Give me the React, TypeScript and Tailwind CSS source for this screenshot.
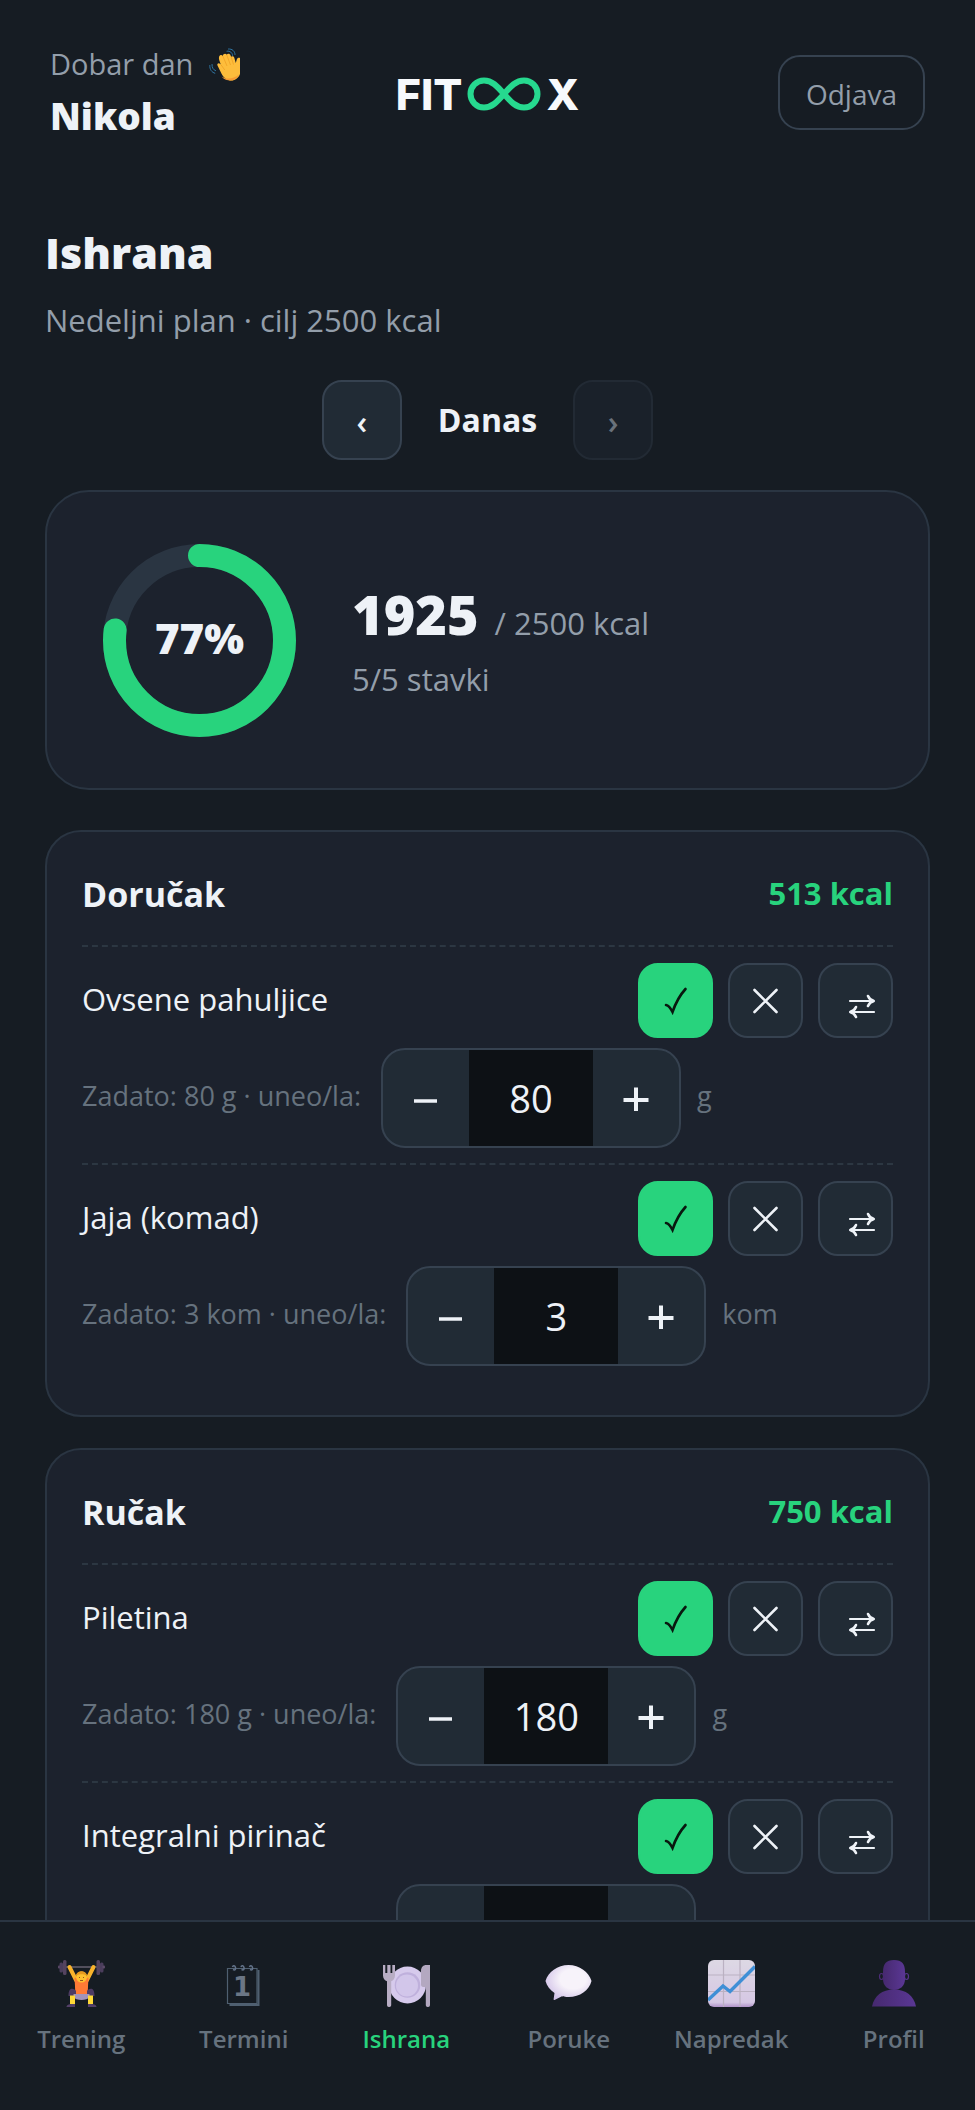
import React, { useState } from 'react';
import clsx from 'clsx';

interface MealItem {
  name: string;
  target: number;
  unit: string;
}

interface Meal {
  title: string;
  kcal: number;
  items: MealItem[];
}

const meals: Meal[] = [
  {
    title: 'Doručak',
    kcal: 513,
    items: [
      { name: 'Ovsene pahuljice', target: 80, unit: 'g' },
      { name: 'Jaja (komad)', target: 3, unit: 'kom' },
    ],
  },
  {
    title: 'Ručak',
    kcal: 750,
    items: [
      { name: 'Piletina', target: 180, unit: 'g' },
      { name: 'Integralni pirinač', target: 200, unit: 'g' },
    ],
  },
];

/* Icons */

const WaveIcon = () => (
  <svg viewBox="0 0 31 33" className="h-[33px] w-[31px]" aria-hidden="true">
    <path
      d="M8.500 17.500c-.8-1.800 1-3.200 2.500-1.800l.8.800-1.600-4.500C9.600 9.500 10 7.500 11.500 7c1-.3 1.800.2 2.300 1 .2-2.300 2.900-3 3.900-1.200.9-1.500 3.200-1.300 3.800.5l.6 1.500c1-1 2.700-.5 3.100.8l1.600 5.400.9-3.200c.5-1.700 2-2.300 3.300-1.800V26c-1.500 4-5 6.500-8.500 6.500-4.500 0-7.500-2.500-9.800-6.500z"
      fill="#fdbd3c"
    />
    <path d="M11.800 16.500l4 5.500M13.800 8l4.200 10M17.700 6.800L21.500 17M22.100 8.800l2.400 7.700" stroke="#f0a427" strokeWidth="0.900" fill="none" />
    <path d="M12.500 28.500c4 3 12 3 17.500-2-2 4-5.500 6-8.500 6s-6.500-1-9-4z" fill="#f59a33" />
    <path
      d="M18 3.200c3-.6 5.400 1.500 5.600 4.300M19.500 1c3.800-.3 6.500 2.300 6.500 5.500M3 16.500c-.2 3 1.200 5.300 3.600 6.200M.8 17.500c-.2 4 2 7 5 7.700"
      fill="none"
      stroke="#2f76a3"
      strokeWidth="1"
      strokeLinecap="round"
    />
  </svg>
);

const LifterIcon = () => (
  <svg viewBox="0 0 47 47" className="size-[47px]" aria-hidden="true">
    <path d="M5 7h37" stroke="#8d8196" strokeWidth="1.200" />
    <rect x="0" y="5.500" width="2.500" height="3" rx="1" fill="#5b4a68" />
    <rect x="1.500" y="2.500" width="3.500" height="10" rx="1.500" fill="#4b3d5c" />
    <rect x="5" y="0" width="3.500" height="15" rx="1.500" fill="#54435f" />
    <rect x="38.500" y="0" width="3.500" height="15" rx="1.500" fill="#54435f" />
    <rect x="42" y="2.500" width="3.500" height="10" rx="1.500" fill="#4b3d5c" />
    <rect x="44.500" y="5.500" width="2.500" height="3" rx="1" fill="#5b4a68" />
    <path d="M11.500 7l6.500 13M35.500 7L29 20" stroke="#f9b32c" strokeWidth="4" strokeLinecap="round" />
    <path d="M16.500 18c2.500-1.500 11.500-1.500 14 0l-1 17h-12z" fill="#ff7a35" />
    <circle cx="23.500" cy="17" r="5.500" fill="#fdc02f" />
    <path d="M18 16c0-6.500 11-6.500 11 0-2-2.500-9-2.500-11 0z" fill="#e59a1f" />
    <path d="M21.500 17v1M25.500 17v1M22 20.500h3" stroke="#8a4b1f" strokeWidth="0.900" />
    <path d="M10.500 36c0-9 5-8 7.500-5v5zM36.500 36c0-9-5-8-7.500-5v5z" fill="#4d3b63" />
    <path d="M15.500 34h16v3c-2 4-14 4-16 0z" fill="#a293b8" />
    <path d="M12 35.500h5V44h-5zM30 35.500h5V44h-5z" fill="#ffd936" />
    <path d="M8.500 47c0-2.500 3-3 8.500-3v3zM38.500 47c0-2.500-3-3-8.500-3v3z" fill="#544069" />
  </svg>
);

const CalendarIcon = () => (
  <svg viewBox="0 0 47 47" className="size-[47px]" aria-hidden="true">
    <path d="M7.500 8.500H37v35H7.500z" fill="none" stroke="#4f5f70" strokeWidth="1.200" />
    <path d="M38.500 10v35H9.500" fill="none" stroke="#4f5f70" strokeWidth="2" />
    <path
      d="M13 9.500c2 1 3 0 2.500-2S13 5.200 12.500 7M21.500 9.500c2 1 3 0 2.500-2S21.500 5.200 21 7M30 9.500c2 1 3 0 2.500-2S30 5.200 29.500 7"
      fill="none"
      stroke="#64748b"
      strokeWidth="1.500"
    />
    <text x="22" y="36" textAnchor="middle" fontSize="26" fontWeight="700" fontFamily="'DejaVu Sans', sans-serif" fill="#6b7685">
      1
    </text>
  </svg>
);

const PlateIcon = () => (
  <svg viewBox="0 0 47 47" className="size-[47px]" aria-hidden="true">
    <circle cx="24.500" cy="25" r="18.500" fill="#d6caec" />
    <circle cx="24.500" cy="25" r="12.800" fill="#bfb0dc" />
    <circle cx="24" cy="25.500" r="11" fill="#d2c6ea" />
    <path d="M0 5h2.300v8h2V5h3.200v8h1.800V5H12v10.500c0 3-1.800 5-3.800 5.800V45c0 2.700-4.200 2.700-4.200 0V21.300C1.800 20.500 0 18.500 0 15.500z" fill="#b8adc4" />
    <path d="M47 5v40c0 2.700-4.200 2.700-4.200 0V27h-2.500c-1.600 0-2.300-1-2.300-2.500V11c0-4 2.500-6 5-6z" fill="#b3a8c0" />
  </svg>
);

const BubbleIcon = () => (
  <svg viewBox="0 0 47 47" className="size-[47px]" aria-hidden="true">
    <defs>
      <radialGradient id="bubble" cx="0.600" cy="0.400" r="0.700">
        <stop offset="0.400" stopColor="#f7f3fa" />
        <stop offset="1" stopColor="#cdbce6" />
      </radialGradient>
    </defs>
    <path
      d="M.5 21C3 12 12.500 5 23.500 5S44 12 46.500 21C44 30.500 35 37 23.500 37c-2.500 0-4.500-.2-6.500-.8L9.500 40c-.6.300-1-.1-.9-.7L9.500 33C5 30 1.800 26 .5 21z"
      fill="url(#bubble)"
    />
  </svg>
);

const ChartIcon = () => (
  <svg viewBox="0 0 47 47" className="size-[47px]" aria-hidden="true">
    <defs>
      <linearGradient id="sheet" x1="0" y1="0" x2="0" y2="1">
        <stop offset="0" stopColor="#ddd8e4" />
        <stop offset="0.900" stopColor="#d6c8e4" />
        <stop offset="1" stopColor="#b193c9" />
      </linearGradient>
    </defs>
    <rect width="47" height="47" rx="6" fill="url(#sheet)" />
    <path d="M15.500 0v47M32 0v47M0 15h47M0 31.500h47" stroke="#bbb1c2" strokeWidth="1.200" />
    <path d="M0 40l15-14 7 5.500L47 6.500" fill="none" stroke="#3f8fd6" strokeWidth="3.400" />
  </svg>
);

const ProfileIcon = () => (
  <svg viewBox="0 0 47 47" className="size-[47px]" aria-hidden="true">
    <defs>
      <linearGradient id="person" x1="0" y1="0" x2="1" y2="0">
        <stop offset="0" stopColor="#46296f" />
        <stop offset="1" stopColor="#5a3794" />
      </linearGradient>
    </defs>
    <ellipse cx="11.500" cy="16.500" rx="2" ry="3" fill="none" stroke="#4c2c78" strokeWidth="1.200" />
    <ellipse cx="36.500" cy="16.500" rx="2" ry="3" fill="none" stroke="#57348d" strokeWidth="1.200" />
    <path d="M13 12C13 4 16 0 24 0s11 4 11 12v7c0 7-5 11-11 11s-11-4-11-11z" fill="url(#person)" />
    <path d="M2 46.500C4 36 12 29.500 24 29.500S44 36 46 46.500z" fill="url(#person)" />
  </svg>
);

const tabs = [
  { label: 'Trening', Icon: LifterIcon },
  { label: 'Termini', Icon: CalendarIcon },
  { label: 'Ishrana', Icon: PlateIcon },
  { label: 'Poruke', Icon: BubbleIcon },
  { label: 'Napredak', Icon: ChartIcon },
  { label: 'Profil', Icon: ProfileIcon },
];

const Logo = () => (
  <div className="flex items-center gap-1 pt-1 font-[Inter,sans-serif] text-[43px] leading-[48px] font-extrabold text-[#f7f9fc]">
    <span>FIT</span>
    <svg viewBox="0 0 76 34" className="h-[34px] w-[76px]" aria-hidden="true">
      <path
        d="M38 17C31 9 26 3.500 18 3.500a13.500 13.500 0 0 0 0 27C26 30.500 31 25 38 17S50 3.500 58 3.500a13.500 13.500 0 0 1 0 27C50 30.500 45 25 38 17z"
        fill="none"
        stroke="#26d98f"
        strokeWidth="6"
      />
    </svg>
    <span>X</span>
  </div>
);

const Header = () => (
  <header className="grid grid-cols-[1fr_auto_1fr] items-center px-[50px] pt-11">
    <div className="flex flex-col gap-2">
      <p className="flex items-center gap-4 text-[29px] leading-[40px] text-[#939eaa]">
        Dobar dan
        <WaveIcon />
      </p>
      <p className="text-[37px] leading-[48px] font-extrabold text-[#eef2f7]">Nikola</p>
    </div>
    <Logo />
    <button
      type="button"
      className="h-[75px] justify-self-end rounded-[22px] border-2 border-[#364250] px-[26px] pt-1 text-[28px] text-[#939eaa]"
    >
      Odjava
    </button>
  </header>
);

const DayPicker = () => (
  <div className="mt-[38px] flex items-center justify-center gap-9">
    <button
      type="button"
      aria-label="Prethodni dan"
      className="size-20 rounded-[20px] border-2 border-[#364250] bg-[#212b35] pt-1 text-[32px] font-semibold text-[#eef2f7]"
    >
      ‹
    </button>
    <span className="text-[32px] leading-[44px] font-bold text-[#eef2f7]">Danas</span>
    <button
      type="button"
      disabled
      aria-label="Sledeći dan"
      className="size-20 rounded-[20px] border-2 border-[#222a34] bg-[#1a212a] pt-1 text-[32px] font-semibold text-[#6a727b]"
    >
      ›
    </button>
  </div>
);

const ProgressRing: React.FC<{ percent: number }> = ({ percent }) => (
  <div className="grid size-[193px] place-items-center">
    <svg viewBox="0 0 193 193" className="col-start-1 row-start-1 size-full -rotate-90" aria-hidden="true">
      <circle cx="96.500" cy="96.500" r="85" fill="none" stroke="#2a3542" strokeWidth="23" />
      <circle
        cx="96.500"
        cy="96.500"
        r="85"
        fill="none"
        stroke="#28d37d"
        strokeWidth="23"
        strokeLinecap="round"
        pathLength="100"
        strokeDasharray={`${percent} 100`}
      />
    </svg>
    <span className="col-start-1 row-start-1 pb-1 text-[42px] leading-[48px] font-extrabold text-[#eef2f7]">{percent}%</span>
  </div>
);

const Summary = () => (
  <section className="mt-[30px] flex h-[300px] items-center gap-14 rounded-[44px] border-2 border-[#2a3542] bg-[#1c222d] px-14">
    <ProgressRing percent={77} />
    <div>
      <p className="flex items-baseline gap-4 leading-[68px]">
        <strong className="text-[54px] font-extrabold text-[#eef2f7]">1925</strong>
        <span className="text-[31px] text-[#939eaa]">/ 2500 kcal</span>
      </p>
      <p className="text-[31px] leading-[44px] text-[#939eaa]">5/5 stavki</p>
    </div>
  </section>
);

interface ActionButtonProps {
  label: string;
  active?: boolean;
  children: React.ReactNode;
}

const ActionButton: React.FC<ActionButtonProps> = ({ label, active, children }) => (
  <button
    type="button"
    aria-label={label}
    className={clsx(
      'size-[75px] overflow-hidden rounded-[20px] border-2',
      active ? 'border-[#28d37d] bg-[#28d37d] text-[#08180f]' : 'border-[#364250] bg-[#212b35] text-[#eef2f7]'
    )}
  >
    <svg viewBox="2 2 71 71" className="size-full" fill="none" stroke="currentColor" strokeLinecap="round" aria-hidden="true">
      {children}
    </svg>
  </button>
);

const MealRow: React.FC<{ item: MealItem }> = ({ item }) => {
  const [amount, setAmount] = useState(String(item.target));
  const inputId = `kolicina-${item.name}`;

  const step = (by: number) => setAmount(String(Math.max(0, (Number(amount) || 0) + by)));

  return (
    <li className="border-t-2 border-dashed border-[#2c3742] pt-4 pb-[15px]">
      <div className="flex items-center gap-[15px]">
        <span className="flex-1 pb-1 text-[31px] leading-[44px] text-[#eef2f7]">{item.name}</span>
        <ActionButton label="Pojedeno" active>
          <path d="M28 42c2.500.5 4.500 3 6.500 7 3.500-10 7.500-17 13-23" strokeWidth="2.600" />
        </ActionButton>
        <ActionButton label="Preskoči">
          <path d="M26.500 27l22 22M48.500 27l-22 22" strokeWidth="2.600" />
        </ActionButton>
        <ActionButton label="Zameni">
          <path d="M32 38h24M32 49h24" strokeWidth="2.200" />
          <path d="M50 33c1 2.500 3 4.300 6 5-3 .7-5 2.500-6 5M38 44c-1 2.500-3 4.300-6 5 3 .7 5 2.500 6 5" strokeWidth="2.600" />
        </ActionButton>
      </div>

      <div className="mt-[10px] flex items-center gap-4 text-[27px] leading-[40px] text-[#66727e]">
        <label htmlFor={inputId} className="pr-1 pb-1">
          Zadato: {item.target} {item.unit} · uneo/la:
        </label>
        <div className="flex h-[100px] overflow-hidden rounded-[24px] border-2 border-[#364250] bg-[#212b35] text-[#eef2f7]">
          <button type="button" aria-label="Smanji" className="grid w-[86px] place-items-center" onClick={() => step(-1)}>
            <svg viewBox="0 0 26 26" className="size-[26px]" stroke="currentColor" strokeWidth="3.500" aria-hidden="true">
              <path d="M1 16h23" />
            </svg>
          </button>
          <input
            id={inputId}
            inputMode="numeric"
            value={amount}
            onChange={(e) => setAmount(e.target.value)}
            className="w-[124px] bg-[#0d1115] text-center text-[38px] outline-none"
          />
          <button type="button" aria-label="Povećaj" className="grid w-[86px] place-items-center" onClick={() => step(1)}>
            <svg viewBox="0 0 26 26" className="size-[26px]" stroke="currentColor" strokeWidth="4" aria-hidden="true">
              <path d="M.5 15h25M13 2.500v24" />
            </svg>
          </button>
        </div>
        <span className="pb-1">{item.unit}</span>
      </div>
    </li>
  );
};

const MealCard: React.FC<{ meal: Meal }> = ({ meal }) => (
  <section className="rounded-[36px] border-2 border-[#2a3542] bg-[#1c222d] px-[35px] pt-[35px] pb-[34px]">
    <div className="flex h-[78px] justify-between leading-[52px] font-bold">
      <h2 className="text-[34px] leading-[54px] text-[#eef2f7]">{meal.title}</h2>
      <span className="text-[31px] text-[#28d37d]">{meal.kcal} kcal</span>
    </div>
    <ul>
      {meal.items.map((item) => (
        <MealRow key={item.name} item={item} />
      ))}
    </ul>
  </section>
);

const TabBar = () => (
  <nav className="grid h-[190px] shrink-0 grid-cols-6 border-t-2 border-[#2a3542] bg-[#161c23] pt-[38px]">
    {tabs.map(({ label, Icon }) => (
      <a
        key={label}
        href={`#${label.toLowerCase()}`}
        aria-current={label === 'Ishrana' ? 'page' : undefined}
        className={clsx(
          'flex flex-col items-center gap-3 text-[24px] leading-[40px] font-semibold',
          label === 'Ishrana' ? 'text-[#28d37d]' : 'text-[#66727e]'
        )}
      >
        <Icon />
        {label}
      </a>
    ))}
  </nav>
);

export default function App() {
  return (
    <div className="flex h-screen flex-col bg-[#161c23] font-['Open_Sans','Noto_Sans',sans-serif]">
      <div className="min-h-0 flex-1 overflow-y-auto [scrollbar-width:none]">
        <Header />
        <main className="px-[45px] pt-[83px] pb-8">
          <h1 className="text-[43px] leading-[60px] font-extrabold text-[#eef2f7]">Ishrana</h1>
          <p className="mt-[15px] text-[31px] leading-[44px] text-[#939eaa]">Nedeljni plan · cilj 2500 kcal</p>
          <DayPicker />
          <Summary />
          <div className="mt-10 flex flex-col gap-[31px]">
            {meals.map((meal) => (
              <MealCard key={meal.title} meal={meal} />
            ))}
          </div>
        </main>
      </div>
      <TabBar />
    </div>
  );
}
